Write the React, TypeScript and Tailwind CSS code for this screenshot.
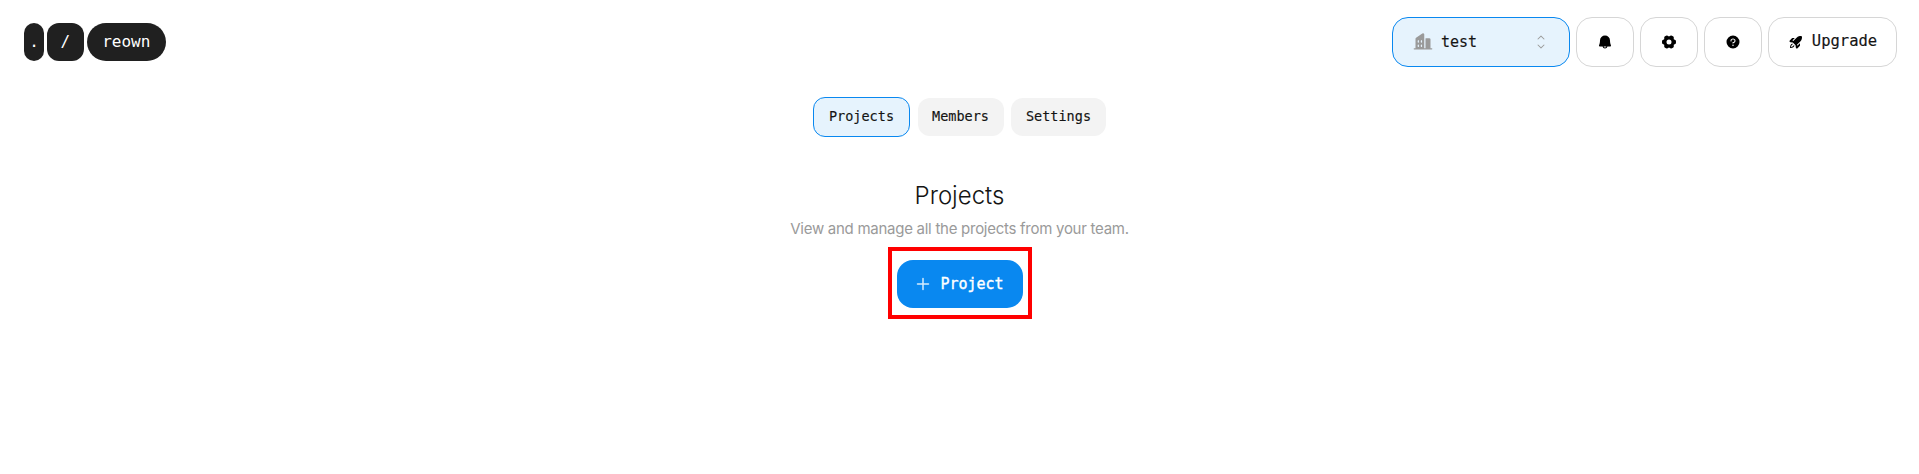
import {
  PiBuildingsFill,
  PiCaretUpDown,
  PiBellFill,
  PiGearSixFill,
  PiQuestionFill,
  PiRocketLaunchFill,
  PiPlusBold,
} from 'react-icons/pi';

const mono = "font-['DejaVu_Sans_Mono',monospace]";

export default function App() {
  return (
    <div className="min-h-[474px] bg-white font-['Inter',sans-serif] text-[#141414]">
      {/* Header */}
      <header className="flex items-start justify-between pl-6 pr-[22px] pt-[17px]">
        <div className={`flex items-center gap-[2.5px] pt-[6px] text-base text-white ${mono}`}>
          <span className="flex h-[38px] w-5 items-center justify-center rounded-[10px] bg-[#202020]">.</span>
          <span className="flex h-[38px] w-[37.5px] items-center justify-center rounded-[12px] bg-[#202020]">/</span>
          <span className="flex h-[38px] w-[79.5px] items-center justify-center rounded-full bg-[#202020]">reown</span>
        </div>

        <div className={`flex items-center gap-[6px] text-[15px] [-webkit-text-stroke:0.15px] ${mono}`}>
          <button className="flex h-[50px] w-[178px] items-center rounded-[16px] border border-[#0988f0] bg-[#e6f3fd] pl-5 pr-5">
            <PiBuildingsFill className="size-5 text-[#9a9a9a]" />
            <span className="ml-[8px] flex-1 text-left">test</span>
            <PiCaretUpDown className="size-4 text-[#9a9a9a]" />
          </button>
          <button className="flex h-[50px] w-[58px] items-center justify-center rounded-[16px] border border-[#d6d6d6]">
            <PiBellFill className="size-4 text-black" />
          </button>
          <button className="flex h-[50px] w-[58px] items-center justify-center rounded-[16px] border border-[#d6d6d6]">
            <PiGearSixFill className="size-4 text-black" />
          </button>
          <button className="flex h-[50px] w-[58px] items-center justify-center rounded-[16px] border border-[#d6d6d6]">
            <PiQuestionFill className="size-4 text-black" />
          </button>
          <button className="flex h-[50px] w-[129px] items-center justify-center gap-[8px] rounded-[16px] border border-[#d6d6d6]">
            <PiRocketLaunchFill className="size-4 text-black" />
            <span className="text-[15.5px]">Upgrade</span>
          </button>
        </div>
      </header>

      {/* Tabs */}
      <nav className={`mt-[30px] flex items-center justify-center gap-[7.5px] text-[13.5px] [-webkit-text-stroke:0.15px] ${mono}`}>
        <button className="h-10 w-[97px] rounded-[12px] border border-[#0988f0] bg-[#e6f3fd] pb-[1px]">Projects</button>
        <button className="h-[38px] w-[86px] rounded-[12px] bg-[#f3f3f3] pb-[1px]">Members</button>
        <button className="h-[38px] w-[95px] rounded-[12px] bg-[#f3f3f3] pb-[1px]">Settings</button>
      </nav>

      {/* Empty state */}
      <main className="mt-[43px] flex flex-col items-center">
        <h1 className="text-2xl font-light leading-[32px]">Projects</h1>
        <p className="mt-[7px] text-[15px] leading-5 tracking-[-0.27px] text-[#9a9a9a]">
          View and manage all the projects from your team.
        </p>
        <div className="mt-[8px] border-4 border-[#ff0000] px-[5px] pb-[7px] pt-[9px]">
          <button className={`flex h-12 w-[126px] items-center justify-center gap-[9px] rounded-[16px] bg-[#0988f0] text-[15px] text-white [-webkit-text-stroke:0.35px] ${mono}`}>
            <PiPlusBold className="size-4 text-[#d5ebfd]" />
            Project
          </button>
        </div>
      </main>
    </div>
  );
}
